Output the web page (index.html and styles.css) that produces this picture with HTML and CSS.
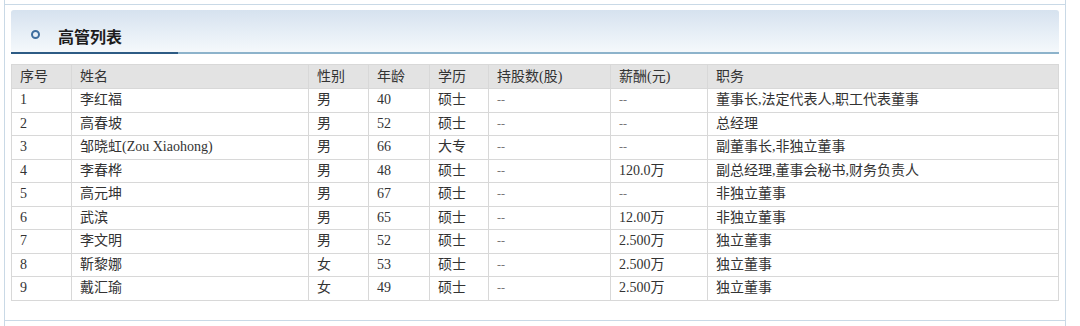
FILE: index.html
```html
<!DOCTYPE html>
<html lang="zh-CN">
<head>
<meta charset="utf-8">
<title>高管列表</title>
<link rel="stylesheet" href="styles.css">
</head>
<body>
<div class="frame">
  <section class="section">
    <div class="panel">
      <span class="ring"></span>
      <h2 class="panel-title">高管列表</h2>
    </div>
    <table class="grid">
      <colgroup>
        <col class="c-no"><col class="c-name"><col class="c-sex"><col class="c-age"><col class="c-edu"><col class="c-share"><col class="c-pay"><col class="c-job">
      </colgroup>
      <thead>
        <tr><th>序号</th><th>姓名</th><th>性别</th><th>年龄</th><th>学历</th><th>持股数(股)</th><th>薪酬(元)</th><th>职务</th></tr>
      </thead>
      <tbody>
        <tr><td>1</td><td>李红福</td><td>男</td><td>40</td><td>硕士</td><td class="dash">--</td><td class="dash">--</td><td>董事长,法定代表人,职工代表董事</td></tr>
        <tr><td>2</td><td>高春坡</td><td>男</td><td>52</td><td>硕士</td><td class="dash">--</td><td class="dash">--</td><td>总经理</td></tr>
        <tr><td>3</td><td>邹晓虹(Zou Xiaohong)</td><td>男</td><td>66</td><td>大专</td><td class="dash">--</td><td class="dash">--</td><td>副董事长,非独立董事</td></tr>
        <tr><td>4</td><td>李春桦</td><td>男</td><td>48</td><td>硕士</td><td class="dash">--</td><td>120.0万</td><td>副总经理,董事会秘书,财务负责人</td></tr>
        <tr><td>5</td><td>高元坤</td><td>男</td><td>67</td><td>硕士</td><td class="dash">--</td><td class="dash">--</td><td>非独立董事</td></tr>
        <tr><td>6</td><td>武滨</td><td>男</td><td>65</td><td>硕士</td><td class="dash">--</td><td>12.00万</td><td>非独立董事</td></tr>
        <tr><td>7</td><td>李文明</td><td>男</td><td>52</td><td>硕士</td><td class="dash">--</td><td>2.500万</td><td>独立董事</td></tr>
        <tr><td>8</td><td>靳黎娜</td><td>女</td><td>53</td><td>硕士</td><td class="dash">--</td><td>2.500万</td><td>独立董事</td></tr>
        <tr><td>9</td><td>戴汇瑜</td><td>女</td><td>49</td><td>硕士</td><td class="dash">--</td><td>2.500万</td><td>独立董事</td></tr>
      </tbody>
    </table>
  </section>
</div>
</body>
</html>
```

FILE: styles.css
```css
html, body {
  margin: 0;
  padding: 0;
  background: #ffffff;
}

body {
  font-family: "Liberation Serif", "Noto Sans CJK SC", serif;
  color: #333333;
}

.frame {
  margin: 0 14px 0 4px;
  height: 326px;
  box-sizing: border-box;
  padding-top: 4px;
  border-left: 1px solid #c9d9e6;
  border-right: 1px solid #c9d9e6;
}

.section {
  border-top: 1px solid #c9d9e6;
  border-bottom: 1px solid #c9d9e6;
  height: 317px;
  box-sizing: border-box;
  padding: 5px 6px 0 6px;
}

.panel {
  height: 44px;
  box-sizing: border-box;
  padding: 8px 0 0 20px;
  display: flex;
  align-items: center;
  border-radius: 3px 3px 0 0;
  background:
    linear-gradient(#2d5b84, #2d5b84) left bottom / 167px 2px no-repeat,
    linear-gradient(#8db3cb, #8db3cb) left bottom / 100% 2px no-repeat,
    linear-gradient(to bottom, #d6e2ef 0%, #e6eef6 50%, #f6f9fc 100%);
}

.ring {
  width: 9px;
  height: 9px;
  box-sizing: border-box;
  border: 2px solid #3f6f9f;
  border-radius: 50%;
  margin-top: -4px;
  flex: none;
}

.panel-title {
  margin: 0 0 0 18px;
  font-family: "Noto Sans CJK SC", sans-serif;
  font-size: 16px;
  font-weight: 700;
  color: #1d1d1d;
  line-height: 20px;
}

.grid {
  margin-top: 10px;
  width: 1048px;
  border-collapse: collapse;
  table-layout: fixed;
  border: 1px solid #cfcfcf;
  font-size: 14px;
}

.c-no { width: 60px; }
.c-name { width: 237px; }
.c-sex { width: 60px; }
.c-age { width: 61px; }
.c-edu { width: 59px; }
.c-share { width: 122px; }
.c-pay { width: 97px; }
.c-job { width: auto; }

.grid th,
.grid td {
  border: 1px solid #d8d8d8;
  padding: 0 0 0 8px;
  text-align: left;
  white-space: nowrap;
  line-height: 18px;
  color: #333333;
}

.grid th {
  font-weight: 400;
  background: #e3e3e3;
  height: 23px;
}

.grid tbody tr {
  height: 23.5px;
}

.grid td.dash {
  color: #777777;
  font-size: 12px;
}
```
